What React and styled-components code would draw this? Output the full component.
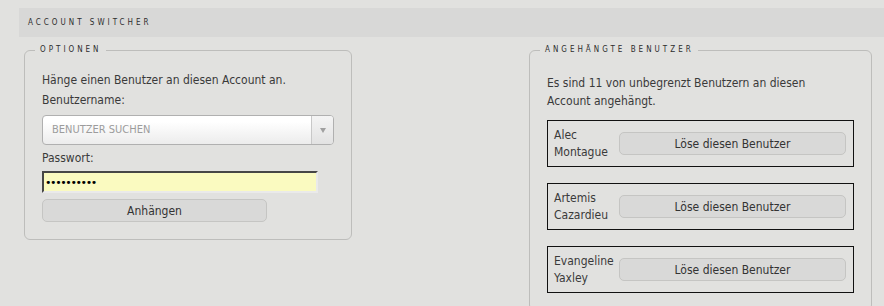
import React from 'react';
import styled, { createGlobalStyle } from 'styled-components';

const GlobalStyle = createGlobalStyle`
  body {
    margin: 0;
    background-color: #e1e1df;
    font-family: "DejaVu Sans Condensed", "DejaVu Sans", sans-serif;
    font-size: 12px;
    color: #3a3a3a;
  }
`;

const Page = styled.div`
  padding: 8px 0 0 19px;
`;

const TitleBar = styled.div`
  height: 29px;
  padding-left: 9px;
  background-color: #d8d8d7;
  font-size: 8px;
  line-height: 29px;
  letter-spacing: 3px;
  color: #2e2e2e;
`;

const Columns = styled.div`
  display: flex;
  justify-content: space-between;
  align-items: flex-start;
  margin-top: 8px;
  padding: 0 12px 0 5px;
`;

const Box = styled.fieldset`
  box-sizing: border-box;
  width: ${p => p.$width}px;
  margin: 0;
  padding: ${p => p.$top}px 17px 17px;
  border: 1px solid #bdbdbb;
  border-radius: 6px;
  min-inline-size: 0;
`;

const Legend = styled.legend`
  margin-left: -7px;
  padding: 0 4px 0 5px;
  font-size: 8px;
  line-height: 10px;
  letter-spacing: 3px;
  color: #2e2e2e;
`;

const Text = styled.div`
  line-height: ${p => p.$lh || 18}px;
`;

const Select = styled.div`
  display: flex;
  height: 30px;
  margin-top: 5px;
  box-sizing: border-box;
  border: 1px solid #b0b0b0;
  border-radius: 4px;
  background: linear-gradient(#ffffff 20%, #ececec);
  overflow: hidden;
`;

const Placeholder = styled.div`
  flex: 1;
  padding-left: 9px;
  font-size: 11px;
  line-height: 28px;
  color: #9c9c9c;
`;

const Arrow = styled.div`
  width: 21px;
  display: flex;
  align-items: center;
  justify-content: center;
  border-left: 1px solid #c8c8c8;
  background: linear-gradient(#f4f4f4, #e2e2e2);

  &::after {
    content: '';
    border-left: 3px solid transparent;
    border-right: 3px solid transparent;
    border-top: 5px solid #a0a0a0;
  }
`;

const Label = styled(Text)`
  margin-top: 3px;
`;

const Password = styled.input`
  display: block;
  box-sizing: border-box;
  width: 276px;
  height: 22px;
  margin: 3px 0 0;
  padding: 0 1px;
  border: 2px inset #9a9a9a;
  border-right-color: #eaeaea;
  border-bottom-color: #eaeaea;
  background-color: #fafac0;
  font-family: "DejaVu Sans", sans-serif;
  font-size: 11px;
  letter-spacing: -1.4px;
  color: #000;
  outline: none;
`;

const Button = styled.button`
  display: block;
  box-sizing: border-box;
  width: ${p => (p.$width ? `${p.$width}px` : '100%')};
  height: 23px;
  margin-top: ${p => p.$mt || 0}px;
  padding: 0;
  border: 1px solid #c5c5c3;
  border-radius: 5px;
  background-color: #d9d9d8;
  font-family: inherit;
  font-size: 12px;
  color: #333;
`;

const UserList = styled.div`
  display: flex;
  flex-direction: column;
  gap: 16px;
  margin-top: 10px;
`;

const UserRow = styled.div`
  display: flex;
  align-items: center;
  height: 47px;
  box-sizing: border-box;
  padding: 0 7px 0 6px;
  border: 1px solid #111;
`;

const UserName = styled.div`
  width: 65px;
  flex-shrink: 0;
  line-height: 17px;
  margin-top: 1px;
`;

const users = [
  ['Alec', 'Montague'],
  ['Artemis', 'Cazardieu'],
  ['Evangeline', 'Yaxley'],
];

export default function App() {
  return (
    <Page>
      <GlobalStyle />
      <TitleBar>ACCOUNT SWITCHER</TitleBar>
      <Columns>
        <Box $width={328} $top={15}>
          <Legend>OPTIONEN</Legend>
          <Text $lh={20}>Hänge einen Benutzer an diesen Account an.</Text>
          <Text $lh={20}>Benutzername:</Text>
          <Select>
            <Placeholder>BENUTZER SUCHEN</Placeholder>
            <Arrow />
          </Select>
          <Label $lh={20}>Passwort:</Label>
          <Password type="password" defaultValue="geheimwort" readOnly />
          <Button $width={225} $mt={6}>Anhängen</Button>
        </Box>
        <Box $width={343} $top={19}>
          <Legend>ANGEHÄNGTE BENUTZER</Legend>
          <Text>
            Es sind 11 von unbegrenzt Benutzern an diesen
            <br />
            Account angehängt.
          </Text>
          <UserList>
            {users.map(([first, last]) => (
              <UserRow key={first}>
                <UserName>
                  {first}
                  <br />
                  {last}
                </UserName>
                <Button>Löse diesen Benutzer</Button>
              </UserRow>
            ))}
          </UserList>
        </Box>
      </Columns>
    </Page>
  );
}
